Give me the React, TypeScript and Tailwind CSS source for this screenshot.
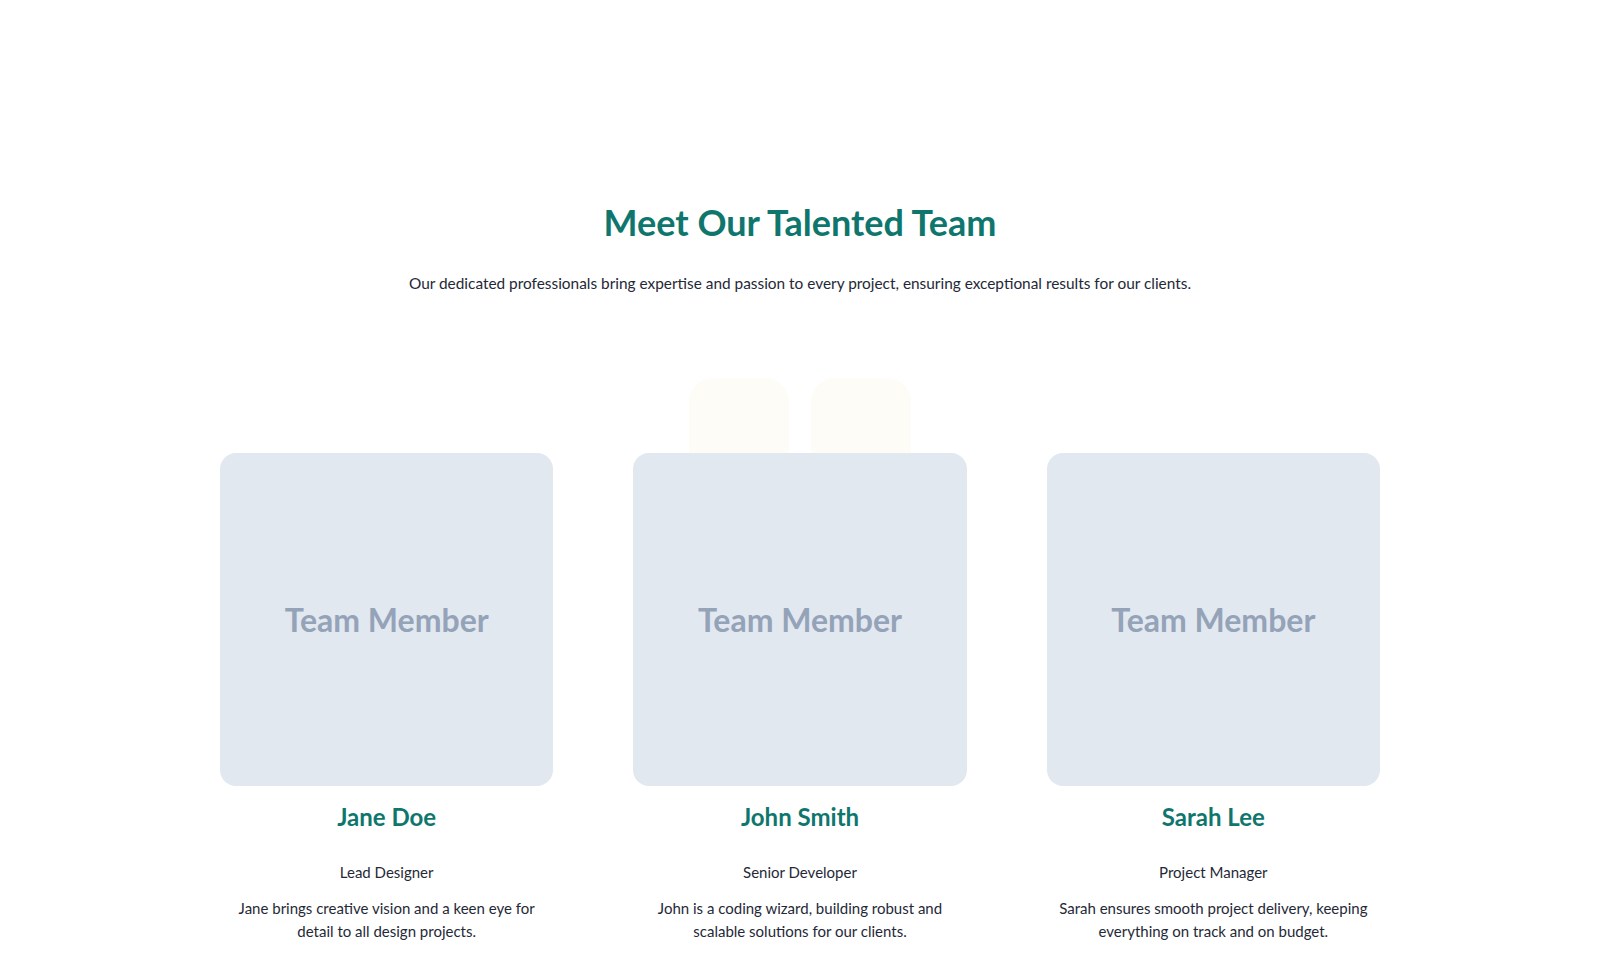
import React from "react";

type Member = {
  name: string;
  role: string;
  bio: string;
};

const members: Member[] = [
  {
    name: "Jane Doe",
    role: "Lead Designer",
    bio: "Jane brings creative vision and a keen eye for detail to all design projects.",
  },
  {
    name: "John Smith",
    role: "Senior Developer",
    bio: "John is a coding wizard, building robust and scalable solutions for our clients.",
  },
  {
    name: "Sarah Lee",
    role: "Project Manager",
    bio: "Sarah ensures smooth project delivery, keeping everything on track and on budget.",
  },
];

function MemberCard({ member }: { member: Member }) {
  return (
    <div className="flex flex-col items-center text-center">
      <div className="flex aspect-square w-full items-center justify-center rounded-2xl bg-[#e2e8f0]">
        <span className="font-['Lato',sans-serif] text-[32px] font-bold text-[#94a3b8]">
          Team Member
        </span>
      </div>
      <h3 className="mt-[15px] text-2xl leading-8 font-bold text-[#0f766e]">{member.name}</h3>
      <p className="mt-[27px] text-[15px] leading-6 text-[#1f2937]">{member.role}</p>
      <p className="mt-[13px] px-2 text-[15px] leading-[23px] text-[#1f2937]">{member.bio}</p>
    </div>
  );
}

export default function App() {
  return (
    <div className="min-h-screen bg-white font-['Lato',sans-serif]">
      <section className="mx-auto max-w-[1200px] px-5 pt-[202px] pb-14">
        <h2 className="text-center text-4xl leading-10 font-bold text-[#0f766e]">
          Meet Our Talented Team
        </h2>
        <p className="mt-[29px] text-center text-[15.4px] leading-6 text-[#1f2937]">
          Our dedicated professionals bring expertise and passion to every project, ensuring
          exceptional results for our clients.
        </p>

        <div className="relative mt-[158px]">
          {/* soft decorative tiles peeking out behind the middle card */}
          <div className="pointer-events-none absolute -top-[75px] left-1/2 flex -translate-x-1/2 gap-[22px]">
            <div className="h-[110px] w-[100px] rounded-3xl bg-[#fdfcf6]" />
            <div className="h-[110px] w-[100px] rounded-3xl bg-[#fdfcf6]" />
          </div>
          <div className="relative grid grid-cols-3 gap-20">
            {members.map((m) => (
              <MemberCard key={m.name} member={m} />
            ))}
          </div>
        </div>
      </section>
    </div>
  );
}
